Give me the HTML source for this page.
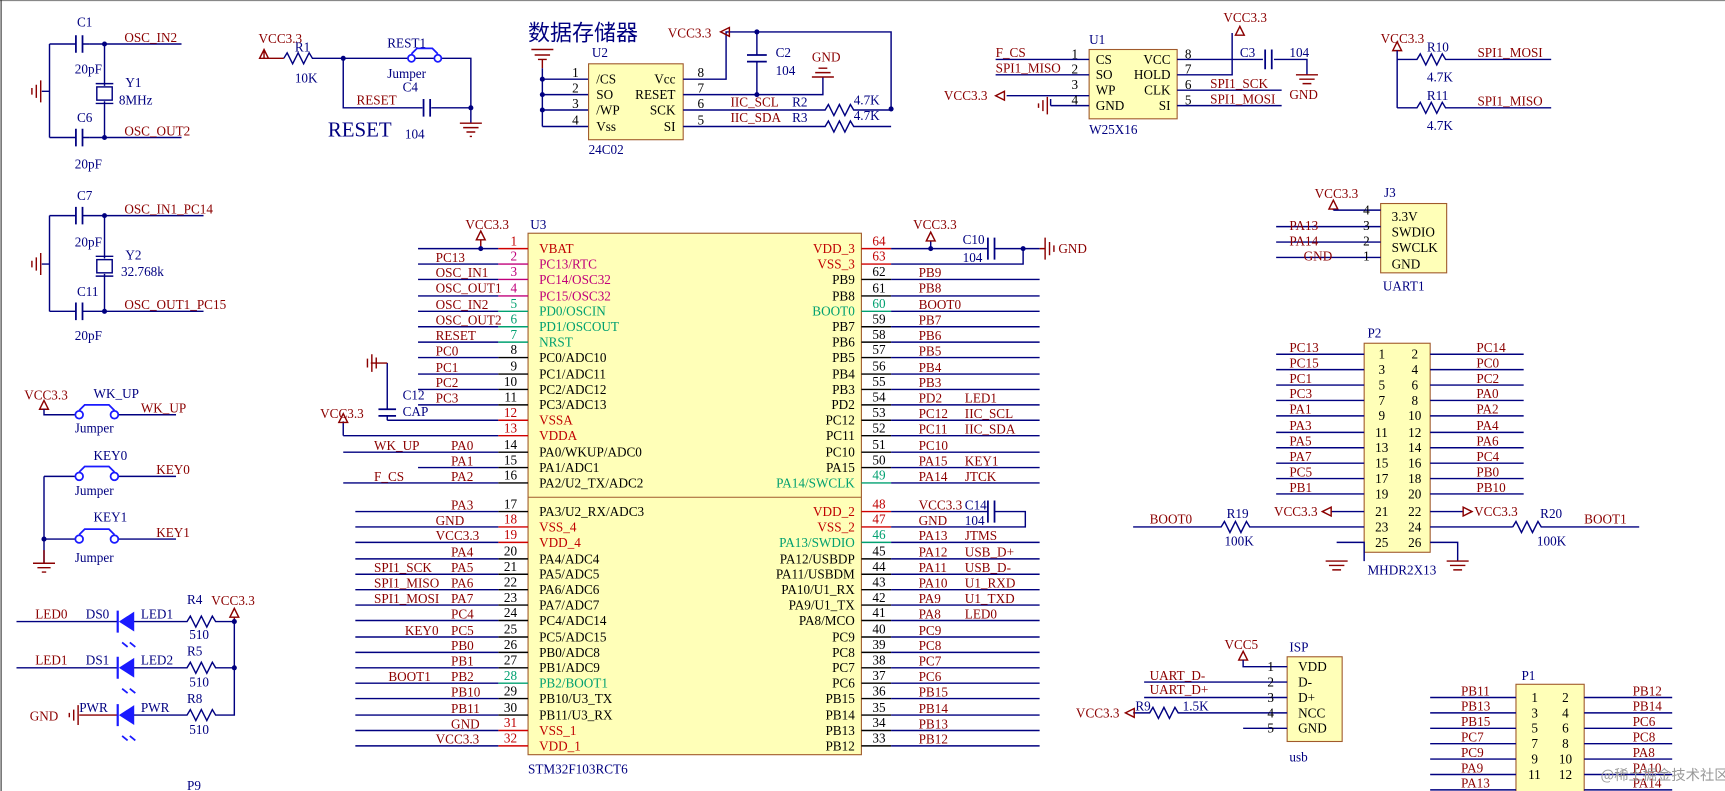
<!DOCTYPE html>
<html><head><meta charset="utf-8"><style>
html,body{margin:0;padding:0;background:#fff;overflow:hidden}
svg{display:block}
text{font-family:"Liberation Serif","Noto Serif CJK SC",serif;font-size:12px}
.w{stroke:#000080;stroke-width:1.3;fill:none}
.p{stroke:#000;stroke-width:1.3}
.r{fill:#c00000}.m{fill:#c0007a}.g{fill:#00a070}.k{fill:#000}.n{fill:#8b0000}.b{fill:#000080}
.lr{stroke:#d00000;stroke-width:1.3}.lm{stroke:#c0007a;stroke-width:1.3}.lg{stroke:#00a070;stroke-width:1.3}
.e{text-anchor:end}
.bl{stroke:#1a1aff;stroke-width:1.6;fill:none}
.gd{stroke:#8b0000;stroke-width:1.3;fill:none}
</style></head><body>
<svg width="1725" height="791" viewBox="0 0 1568 719" xmlns="http://www.w3.org/2000/svg">
<line x1="0" y1="0.5" x2="1568" y2="0.5" stroke="#888"/>
<line x1="1" y1="0" x2="1" y2="719" stroke="#333"/>

<!-- crystal Y1 -->
<g>
<text x="70" y="24" class="b">C1</text>
<path class="w" d="M45 40H69M81 40H165M45 40V125M45 83H38M45 125H69M81 125H165M95 40V78M95 92V125"/>
<path d="M69 32V48M75 32V48M69 117V133M75 117V133" stroke="#000080" stroke-width="1.6"/>
<path class="w" d="M75 40H81M75 125H81"/>
<circle cx="95" cy="40" r="2.3" fill="#000080"/><circle cx="95" cy="125" r="2.3" fill="#000080"/>
<rect x="88" y="79" width="14" height="12" fill="none" stroke="#000080" stroke-width="1.3"/>
<path d="M87 76H103M87 94H103" stroke="#000080" stroke-width="1.3"/>
<path class="gd" d="M37 73V93M33 77V89M29 80V86"/>
<text x="113" y="38" class="n">OSC_IN2</text>
<text x="68" y="67" class="b">20pF</text>
<text x="114" y="79" class="b">Y1</text><text x="108" y="95" class="b">8MHz</text>
<text x="70" y="111" class="b">C6</text>
<text x="113" y="123" class="n">OSC_OUT2</text>
<text x="68" y="153" class="b">20pF</text>
</g>
<!-- crystal Y2 -->
<g>
<text x="70" y="182" class="b">C7</text>
<path class="w" d="M45 196H69M81 196H185M45 196V283M45 240H38M45 283H69M81 283H185M95 196V235M95 249V283M75 196H81M75 283H81"/>
<path d="M69 188V204M75 188V204M69 275V291M75 275V291" stroke="#000080" stroke-width="1.6"/>
<circle cx="95" cy="196" r="2.3" fill="#000080"/><circle cx="95" cy="283" r="2.3" fill="#000080"/>
<rect x="88" y="236" width="14" height="12" fill="none" stroke="#000080" stroke-width="1.3"/>
<path d="M87 233H103M87 251H103" stroke="#000080" stroke-width="1.3"/>
<path class="gd" d="M37 230V250M33 234V246M29 237V243"/>
<text x="113" y="194" class="n">OSC_IN1_PC14</text>
<text x="68" y="224" class="b">20pF</text>
<text x="114" y="236" class="b">Y2</text><text x="110" y="251" class="b">32.768k</text>
<text x="70" y="269" class="b">C11</text>
<text x="113" y="281" class="n">OSC_OUT1_PC15</text>
<text x="68" y="309" class="b">20pF</text>
</g>

<!-- RESET -->
<g>
<text x="235" y="39" class="n">VCC3.3</text>
<path class="gd" d="M240 45V53H258M240 45l-4 8h8z"/>
<text x="268" y="47" class="b">R1</text>
<path class="w" d="M258 53l3 -5l5 10l5 -10l5 10l5 -10l3 5H371M377 53H395M401 53H428V98M312 53V98H384M392 98H428V112"/>
<circle cx="312" cy="53" r="2.3" fill="#000080"/><circle cx="428" cy="98" r="2.3" fill="#000080"/>
<path class="bl" d="M374 49l5 -5h14l5 5"/><circle cx="374" cy="53" r="3.2" class="bl" fill="#fff"/><circle cx="398" cy="53" r="3.2" class="bl" fill="#fff"/>
<path d="M385 90V106M391 90V106" stroke="#000080" stroke-width="1.6"/>
<path class="gd" d="M418 112H438M421 116H435M424 120H432M427 124H429"/>
<text x="268" y="75" class="b">10K</text>
<text x="352" y="43" class="b">REST1</text>
<text x="352" y="71" class="b">Jumper</text>
<text x="366" y="83" class="b">C4</text>
<text x="324" y="95" class="n">RESET</text>
<text x="368" y="126" class="b">104</text>
<text x="298" y="124" class="b" style="font-size:19px">RESET</text>
</g>

<!-- U2 24C02 -->
<g>
<text x="480" y="37" class="b" style="font-size:20px;font-family:'Noto Sans CJK SC',sans-serif">数据存储器</text>
<path class="gd" d="M483 45H503M486 50H500M489 54H497M493 54V62"/>
<path class="w" d="M493 62V115M493 72H535M493 86H535M493 100H535M493 115H535"/>
<circle cx="493" cy="72" r="2.3" fill="#000080"/><circle cx="493" cy="86" r="2.3" fill="#000080"/><circle cx="493" cy="100" r="2.3" fill="#000080"/>
<text x="538" y="52" class="b">U2</text>
<rect x="535" y="58" width="86" height="69" fill="#ffffb8" stroke="#a05a2c"/>
<text x="520" y="70" class="k">1</text><text x="520" y="84" class="k">2</text><text x="520" y="98" class="k">3</text><text x="520" y="113" class="k">4</text>
<text x="542" y="76" class="k">/CS</text><text x="542" y="90" class="k">SO</text><text x="542" y="104" class="k">/WP</text><text x="542" y="119" class="k">Vss</text>
<text x="614" y="76" class="k e">Vcc</text><text x="614" y="90" class="k e">RESET</text><text x="614" y="104" class="k e">SCK</text><text x="614" y="119" class="k e">SI</text>
<text x="634" y="70" class="k">8</text><text x="634" y="84" class="k">7</text><text x="634" y="98" class="k">6</text><text x="634" y="113" class="k">5</text>
<path class="w" d="M621 72H660V29H810V99M621 86H748V70M621 100H750l3 -5l5 10l5 -10l5 10l5 -10l3 5H810M621 115H750l3 -5l5 10l5 -10l5 10l5 -10l3 5H810M688 29V50M688 56V86"/>
<path d="M679 50H697M679 56H697" stroke="#000080" stroke-width="1.6"/>
<circle cx="688" cy="29" r="2.3" fill="#000080"/><circle cx="688" cy="86" r="2.3" fill="#000080"/><circle cx="810" cy="99" r="2.3" fill="#000080"/>
<path class="gd" d="M655 29l8 -4v8zM738 70H758M741 66H755M744 62H752"/>
<text x="607" y="34" class="n">VCC3.3</text>
<text x="705" y="52" class="b">C2</text><text x="705" y="68" class="b">104</text>
<text x="738" y="56" class="n">GND</text>
<text x="664" y="97" class="n">IIC_SCL</text><text x="664" y="111" class="n">IIC_SDA</text>
<text x="720" y="97" class="b">R2</text><text x="720" y="111" class="b">R3</text>
<text x="776" y="95" class="b">4.7K</text><text x="776" y="109" class="b">4.7K</text>
<text x="535" y="140" class="b">24C02</text>
</g>

<!-- U1 W25X16 -->
<g>
<text x="990" y="40" class="b">U1</text>
<rect x="990" y="45" width="80" height="63" fill="#ffffb8" stroke="#a05a2c"/>
<path class="w" d="M905 54H990M905 68H990M915 87H990M955 96H990M955 96V90M1070 54H1148M1158 54H1188V68M1070 68H1120V30M1070 82H1165M1070 96H1165"/>
<path d="M1150 45V63M1156 45V63" stroke="#000080" stroke-width="1.6"/>
<path class="gd" d="M952 88V104M948 91V101M944 94V98M905 87l8 -4v8zM1178 68H1198M1181 72H1195M1184 76H1192M1127 24l-4 8h8z"/>
<text x="980" y="53" class="k e">1</text><text x="980" y="67" class="k e">2</text><text x="980" y="81" class="k e">3</text><text x="980" y="95" class="k e">4</text>
<text x="996" y="58" class="k">CS</text><text x="996" y="72" class="k">SO</text><text x="996" y="86" class="k">WP</text><text x="996" y="100" class="k">GND</text>
<text x="1064" y="58" class="k e">VCC</text><text x="1064" y="72" class="k e">HOLD</text><text x="1064" y="86" class="k e">CLK</text><text x="1064" y="100" class="k e">SI</text>
<text x="1077" y="53" class="k">8</text><text x="1077" y="67" class="k">7</text><text x="1077" y="81" class="k">6</text><text x="1077" y="95" class="k">5</text>
<text x="905" y="52" class="n">F_CS</text><text x="905" y="66" class="n">SPI1_MISO</text>
<text x="858" y="91" class="n">VCC3.3</text>
<text x="1127" y="52" class="b">C3</text><text x="1172" y="52" class="b">104</text>
<text x="1100" y="80" class="n">SPI1_SCK</text><text x="1100" y="94" class="n">SPI1_MOSI</text>
<text x="1112" y="20" class="n">VCC3.3</text>
<text x="1172" y="90" class="n">GND</text>
<text x="990" y="122" class="b">W25X16</text>
</g>

<!-- R10 R11 -->
<g>
<text x="1255" y="39" class="n">VCC3.3</text>
<path class="gd" d="M1270 38l-4 8h8z"/>
<path class="w" d="M1270 46V98M1270 54H1288l3 -5l5 10l5 -10l5 10l5 -10l3 5H1410M1270 98H1288l3 -5l5 10l5 -10l5 10l5 -10l3 5H1410"/>
<text x="1297" y="47" class="b">R10</text><text x="1297" y="74" class="b">4.7K</text>
<text x="1297" y="91" class="b">R11</text><text x="1297" y="118" class="b">4.7K</text>
<text x="1343" y="52" class="n">SPI1_MOSI</text><text x="1343" y="96" class="n">SPI1_MISO</text>
</g>

<!-- J3 -->
<g>
<text x="1195" y="180" class="n">VCC3.3</text>
<path class="gd" d="M1212 182l-4 8h8zM1212 190V191"/>
<text x="1258" y="179" class="b">J3</text>
<rect x="1255" y="185" width="60" height="63" fill="#ffffb8" stroke="#a05a2c"/>
<path class="w" d="M1212 191H1255M1160 206H1255M1160 220H1255M1160 234H1255"/>
<text x="1245" y="195" class="k e">4</text><text x="1245" y="209" class="k e">3</text><text x="1245" y="223" class="k e">2</text><text x="1245" y="237" class="k e">1</text>
<text x="1265" y="201" class="k">3.3V</text><text x="1265" y="215" class="k">SWDIO</text><text x="1265" y="229" class="k">SWCLK</text><text x="1265" y="244" class="k">GND</text>
<text x="1172" y="209" class="n">PA13</text><text x="1172" y="223" class="n">PA14</text><text x="1185" y="237" class="n">GND</text>
<text x="1257" y="264" class="b">UART1</text>
</g>

<!-- P2 -->
<g>
<text x="1243" y="307" class="b">P2</text>
<rect x="1240" y="312" width="60" height="190" fill="#ffffb8" stroke="#a05a2c"/>
<path class="w" d="M1160 322H1240M1160 336H1240M1160 350H1240M1160 364H1240M1160 378H1240M1160 393H1240M1160 407H1240M1160 421H1240M1160 435H1240M1160 449H1240M1210 465H1240M1140 479H1240M1215 493H1240V510M1300 322H1385M1300 336H1385M1300 350H1385M1300 364H1385M1300 378H1385M1300 393H1385M1300 407H1385M1300 421H1385M1300 435H1385M1300 449H1385M1300 465H1330M1300 479H1375M1300 493H1325V510M1030 479H1110l3 -5l5 10l5 -10l5 10l5 -10l3 5H1140M1375 479l3 -5l5 10l5 -10l5 10l5 -10l3 5H1490"/>
<path class="gd" d="M1205 510H1225M1208 514H1222M1211 518H1219M1315 510H1335M1318 514H1332M1321 518H1329M1202 465l8 -4v8zM1338 465l-8 -4v8z"/>
<text x="1253" y="326" class="k">1</text><text x="1253" y="340" class="k">3</text><text x="1253" y="354" class="k">5</text><text x="1253" y="368" class="k">7</text><text x="1253" y="382" class="k">9</text><text x="1250" y="397" class="k">11</text><text x="1250" y="411" class="k">13</text><text x="1250" y="425" class="k">15</text><text x="1250" y="439" class="k">17</text><text x="1250" y="453" class="k">19</text><text x="1250" y="469" class="k">21</text><text x="1250" y="483" class="k">23</text><text x="1250" y="497" class="k">25</text>
<text x="1283" y="326" class="k">2</text><text x="1283" y="340" class="k">4</text><text x="1283" y="354" class="k">6</text><text x="1283" y="368" class="k">8</text><text x="1280" y="382" class="k">10</text><text x="1280" y="397" class="k">12</text><text x="1280" y="411" class="k">14</text><text x="1280" y="425" class="k">16</text><text x="1280" y="439" class="k">18</text><text x="1280" y="453" class="k">20</text><text x="1280" y="469" class="k">22</text><text x="1280" y="483" class="k">24</text><text x="1280" y="497" class="k">26</text>
<text x="1172" y="320" class="n">PC13</text><text x="1172" y="334" class="n">PC15</text><text x="1172" y="348" class="n">PC1</text><text x="1172" y="362" class="n">PC3</text><text x="1172" y="376" class="n">PA1</text><text x="1172" y="391" class="n">PA3</text><text x="1172" y="405" class="n">PA5</text><text x="1172" y="419" class="n">PA7</text><text x="1172" y="433" class="n">PC5</text><text x="1172" y="447" class="n">PB1</text>
<text x="1342" y="320" class="n">PC14</text><text x="1342" y="334" class="n">PC0</text><text x="1342" y="348" class="n">PC2</text><text x="1342" y="362" class="n">PA0</text><text x="1342" y="376" class="n">PA2</text><text x="1342" y="391" class="n">PA4</text><text x="1342" y="405" class="n">PA6</text><text x="1342" y="419" class="n">PC4</text><text x="1342" y="433" class="n">PB0</text><text x="1342" y="447" class="n">PB10</text>
<text x="1158" y="469" class="n">VCC3.3</text><text x="1340" y="469" class="n">VCC3.3</text>
<text x="1045" y="476" class="n">BOOT0</text><text x="1115" y="471" class="b">R19</text><text x="1113" y="496" class="b">100K</text>
<text x="1400" y="471" class="b">R20</text><text x="1397" y="496" class="b">100K</text><text x="1440" y="476" class="n">BOOT1</text>
<text x="1243" y="522" class="b">MHDR2X13</text>
</g>

<!-- ISP -->
<g>
<text x="1113" y="590" class="n">VCC5</text>
<path class="gd" d="M1130 592l-4 8h8z"/>
<text x="1172" y="592" class="b">ISP</text>
<rect x="1170" y="597" width="50" height="77" fill="#ffffb8" stroke="#a05a2c"/>
<path class="w" d="M1130 600V606H1170M1040 620H1170M1040 634H1170M1030 648H1045l3 -5l5 10l5 -10l5 10l5 -10l3 5H1170M1130 662H1170"/>
<path class="gd" d="M1023 648l8 -4v8z"/>
<text x="1158" y="610" class="k e">1</text><text x="1158" y="624" class="k e">2</text><text x="1158" y="638" class="k e">3</text><text x="1158" y="652" class="k e">4</text><text x="1158" y="666" class="k e">5</text>
<text x="1180" y="610" class="k">VDD</text><text x="1180" y="624" class="k">D-</text><text x="1180" y="638" class="k">D+</text><text x="1180" y="652" class="k">NCC</text><text x="1180" y="666" class="k">GND</text>
<text x="1045" y="618" class="n">UART_D-</text><text x="1045" y="631" class="n">UART_D+</text>
<text x="1032" y="646" class="b">R9</text><text x="1075" y="646" class="b">1.5K</text>
<text x="978" y="652" class="n">VCC3.3</text>
<text x="1172" y="692" class="b">usb</text>
</g>

<!-- P1 -->
<g>
<text x="1383" y="618" class="b">P1</text>
<rect x="1378" y="622" width="62" height="100" fill="#ffffb8" stroke="#a05a2c"/>
<path class="w" d="M1300 634H1378M1300 648H1378M1300 662H1378M1300 676H1378M1300 690H1378M1300 704H1378M1300 718H1378M1440 634H1520M1440 648H1520M1440 662H1520M1440 676H1520M1440 690H1520M1440 704H1520M1440 718H1520"/>
<text x="1392" y="638" class="k">1</text><text x="1392" y="652" class="k">3</text><text x="1392" y="666" class="k">5</text><text x="1392" y="680" class="k">7</text><text x="1392" y="694" class="k">9</text><text x="1389" y="708" class="k">11</text>
<text x="1420" y="638" class="k">2</text><text x="1420" y="652" class="k">4</text><text x="1420" y="666" class="k">6</text><text x="1420" y="680" class="k">8</text><text x="1417" y="694" class="k">10</text><text x="1417" y="708" class="k">12</text>
<text x="1328" y="632" class="n">PB11</text><text x="1328" y="646" class="n">PB13</text><text x="1328" y="660" class="n">PB15</text><text x="1328" y="674" class="n">PC7</text><text x="1328" y="688" class="n">PC9</text><text x="1328" y="702" class="n">PA9</text><text x="1328" y="716" class="n">PA13</text>
<text x="1484" y="632" class="n">PB12</text><text x="1484" y="646" class="n">PB14</text><text x="1484" y="660" class="n">PC6</text><text x="1484" y="674" class="n">PC8</text><text x="1484" y="688" class="n">PA8</text><text x="1484" y="702" class="n">PA10</text><text x="1484" y="716" class="n">PA14</text>
<text x="1455" y="709" fill="#999" style="font-family:'Noto Sans CJK SC',sans-serif;font-size:13px">@稀土掘金技术社区</text>
</g>

<!-- keys -->
<g>
<text x="22" y="363" class="n">VCC3.3</text>
<path class="gd" d="M40 364l-4 8h8z"/>
<path class="w" d="M40 372V377H68M108 377H160M40 433V512M40 433H68M108 433H160M40 490H68M108 490H160"/>
<circle cx="40" cy="490" r="2.3" fill="#000080"/>
<path class="bl" d="M72 373l5 -5h22l5 5M72 429l5 -5h22l5 5M72 486l5 -5h22l5 5"/>
<circle cx="72" cy="377" r="3.5" class="bl" fill="#fff"/><circle cx="104" cy="377" r="3.5" class="bl" fill="#fff"/>
<circle cx="72" cy="433" r="3.5" class="bl" fill="#fff"/><circle cx="104" cy="433" r="3.5" class="bl" fill="#fff"/>
<circle cx="72" cy="490" r="3.5" class="bl" fill="#fff"/><circle cx="104" cy="490" r="3.5" class="bl" fill="#fff"/>
<path class="gd" d="M40 500V512M30 512H50M34 516H46M38 520H42"/>
<text x="85" y="362" class="b">WK_UP</text><text x="128" y="375" class="n">WK_UP</text><text x="68" y="393" class="b">Jumper</text>
<text x="85" y="418" class="b">KEY0</text><text x="142" y="431" class="n">KEY0</text><text x="68" y="450" class="b">Jumper</text>
<text x="85" y="474" class="b">KEY1</text><text x="142" y="488" class="n">KEY1</text><text x="68" y="511" class="b">Jumper</text>
</g>

<!-- LEDs -->
<g>
<path class="w" d="M15 565H107M121 565H170l3 -5l5 10l5 -10l5 10l5 -10l3 5H213V650H199M15 607H107M121 607H170l3 -5l5 10l5 -10l5 10l5 -10l3 5H213M121 650H170l3 -5l5 10l5 -10l5 10l5 -10l3 5H199"/>
<path class="gd" d="M72 650H107M71 641V659M67 645V655M63 648V652M213 553l-4 8h8zM213 561V565"/>
<circle cx="213" cy="565" r="2.3" fill="#000080"/><circle cx="213" cy="607" r="2.3" fill="#000080"/>
<path d="M122 556V574L108 565Z M122 598V616L108 607Z M122 641V659L108 650Z" fill="#1a1aff"/>
<path d="M107 555V575M107 597V617M107 640V660" stroke="#1a1aff" stroke-width="2"/>
<path class="bl" d="M111 584l5 4M118 584l5 4M111 626l5 4M118 626l5 4M111 669l5 4M118 669l5 4" stroke-width="1.3"/>
<text x="32" y="562" class="n">LED0</text><text x="78" y="562" class="b">DS0</text><text x="128" y="562" class="b">LED1</text>
<text x="170" y="549" class="b">R4</text><text x="192" y="550" class="n">VCC3.3</text><text x="172" y="581" class="b">510</text>
<text x="32" y="604" class="n">LED1</text><text x="78" y="604" class="b">DS1</text><text x="128" y="604" class="b">LED2</text>
<text x="170" y="596" class="b">R5</text><text x="172" y="624" class="b">510</text>
<text x="27" y="655" class="n">GND</text><text x="72" y="647" class="b">PWR</text><text x="128" y="647" class="b">PWR</text>
<text x="170" y="639" class="b">R8</text><text x="172" y="667" class="b">510</text>
<text x="170" y="718" class="b">P9</text>
</g>

<!-- U3 main chip -->
<g>
<text x="482" y="208" class="b">U3</text>
<text x="423" y="208" class="n">VCC3.3</text>
<path class="gd" d="M437 210l-4 8h8zM437 218V226"/>
<rect x="480" y="212" width="303" height="474" fill="#ffffb8" stroke="#a05a2c"/>
<line x1="480" y1="452" x2="783" y2="452" stroke="#a05a2c"/>
<path class="w" d="M380 226H453M380 240H453M380 254H453M380 269H453M380 283H453M380 297H453M380 311H453M380 325H453M380 340H453M380 354H453M380 368H453M352 382H453M312 396H453M312 411H453M380 425H453M312 439H453M352 330V372M352 378V382M312 383V396"/>
<path d="M344 372H360M344 378H360" stroke="#000080" stroke-width="1.6"/>
<path class="gd" d="M337 330H352M338 322V338M342 325V335M334 326V334M312 376l-4 8h8z"/>
<circle cx="437" cy="226" r="2.3" fill="#000080"/>
<path class="lr" d="M453 226H480M453 382H480M453 396H480M453 479H480M453 493H480M453 664H480M453 678H480"/>
<path class="lm" d="M453 240H480M453 254H480M453 269H480"/>
<path class="lg" d="M453 283H480M453 297H480M453 311H480M453 621H480"/>
<path class="p" d="M453 325H480M453 340H480M453 354H480M453 368H480M453 411H480M453 425H480M453 439H480M453 465H480M453 508H480M453 522H480M453 536H480M453 550H480M453 564H480M453 579H480M453 593H480M453 607H480M453 635H480M453 650H480"/>
<path class="w" d="M323 465H453M323 479H453M323 493H453M323 508H453M323 522H453M323 536H453M323 550H453M323 564H453M323 579H453M323 593H453M323 607H453M323 621H453M323 635H453M323 650H453M323 664H453M323 678H453"/>
<text x="470" y="223" class="r e">1</text><text x="470" y="237" class="m e">2</text><text x="470" y="251" class="m e">3</text><text x="470" y="266" class="m e">4</text><text x="470" y="280" class="g e">5</text><text x="470" y="294" class="g e">6</text><text x="470" y="308" class="g e">7</text><text x="470" y="322" class="k e">8</text><text x="470" y="337" class="k e">9</text><text x="470" y="351" class="k e">10</text><text x="470" y="365" class="k e">11</text><text x="470" y="379" class="r e">12</text><text x="470" y="393" class="r e">13</text><text x="470" y="408" class="k e">14</text><text x="470" y="422" class="k e">15</text><text x="470" y="436" class="k e">16</text>
<text x="470" y="462" class="k e">17</text><text x="470" y="476" class="r e">18</text><text x="470" y="490" class="r e">19</text><text x="470" y="505" class="k e">20</text><text x="470" y="519" class="k e">21</text><text x="470" y="533" class="k e">22</text><text x="470" y="547" class="k e">23</text><text x="470" y="561" class="k e">24</text><text x="470" y="576" class="k e">25</text><text x="470" y="590" class="k e">26</text><text x="470" y="604" class="k e">27</text><text x="470" y="618" class="g e">28</text><text x="470" y="632" class="k e">29</text><text x="470" y="647" class="k e">30</text><text x="470" y="661" class="r e">31</text><text x="470" y="675" class="r e">32</text>
<text x="490" y="230" class="r">VBAT</text><text x="490" y="244" class="m">PC13/RTC</text><text x="490" y="258" class="m">PC14/OSC32</text><text x="490" y="273" class="m">PC15/OSC32</text><text x="490" y="287" class="g">PD0/OSCIN</text><text x="490" y="301" class="g">PD1/OSCOUT</text><text x="490" y="315" class="g">NRST</text><text x="490" y="329" class="k">PC0/ADC10</text><text x="490" y="344" class="k">PC1/ADC11</text><text x="490" y="358" class="k">PC2/ADC12</text><text x="490" y="372" class="k">PC3/ADC13</text><text x="490" y="386" class="r">VSSA</text><text x="490" y="400" class="r">VDDA</text><text x="490" y="415" class="k">PA0/WKUP/ADC0</text><text x="490" y="429" class="k">PA1/ADC1</text><text x="490" y="443" class="k">PA2/U2_TX/ADC2</text>
<text x="490" y="469" class="k">PA3/U2_RX/ADC3</text><text x="490" y="483" class="r">VSS_4</text><text x="490" y="497" class="r">VDD_4</text><text x="490" y="512" class="k">PA4/ADC4</text><text x="490" y="526" class="k">PA5/ADC5</text><text x="490" y="540" class="k">PA6/ADC6</text><text x="490" y="554" class="k">PA7/ADC7</text><text x="490" y="568" class="k">PC4/ADC14</text><text x="490" y="583" class="k">PC5/ADC15</text><text x="490" y="597" class="k">PB0/ADC8</text><text x="490" y="611" class="k">PB1/ADC9</text><text x="490" y="625" class="g">PB2/BOOT1</text><text x="490" y="639" class="k">PB10/U3_TX</text><text x="490" y="654" class="k">PB11/U3_RX</text><text x="490" y="668" class="r">VSS_1</text><text x="490" y="682" class="r">VDD_1</text>
<text x="396" y="238" class="n">PC13</text><text x="396" y="252" class="n">OSC_IN1</text><text x="396" y="266" class="n">OSC_OUT1</text><text x="396" y="281" class="n">OSC_IN2</text><text x="396" y="295" class="n">OSC_OUT2</text><text x="396" y="309" class="n">RESET</text><text x="396" y="323" class="n">PC0</text><text x="396" y="338" class="n">PC1</text><text x="396" y="352" class="n">PC2</text><text x="396" y="366" class="n">PC3</text>
<text x="366" y="363" class="b">C12</text><text x="366" y="378" class="b">CAP</text><text x="291" y="380" class="n">VCC3.3</text>
<text x="340" y="409" class="n">WK_UP</text><text x="410" y="409" class="n">PA0</text><text x="410" y="423" class="n">PA1</text><text x="340" y="437" class="n">F_CS</text><text x="410" y="437" class="n">PA2</text>
<text x="410" y="463" class="n">PA3</text><text x="396" y="477" class="n">GND</text><text x="396" y="491" class="n">VCC3.3</text><text x="410" y="506" class="n">PA4</text>
<text x="340" y="520" class="n">SPI1_SCK</text><text x="410" y="520" class="n">PA5</text><text x="340" y="534" class="n">SPI1_MISO</text><text x="410" y="534" class="n">PA6</text><text x="340" y="548" class="n">SPI1_MOSI</text><text x="410" y="548" class="n">PA7</text>
<text x="410" y="562" class="n">PC4</text><text x="368" y="577" class="n">KEY0</text><text x="410" y="577" class="n">PC5</text><text x="410" y="591" class="n">PB0</text><text x="410" y="605" class="n">PB1</text><text x="353" y="619" class="n">BOOT1</text><text x="410" y="619" class="n">PB2</text><text x="410" y="633" class="n">PB10</text><text x="410" y="648" class="n">PB11</text><text x="410" y="662" class="n">GND</text><text x="396" y="676" class="n">VCC3.3</text>
<text x="480" y="703" class="b">STM32F103RCT6</text>

<path class="lr" d="M783 226H810M783 240H810M783 465H810M783 479H810"/>
<path class="lg" d="M783 283H810M783 439H810M783 493H810"/>
<path class="p" d="M783 254H810M783 269H810M783 297H810M783 311H810M783 325H810M783 340H810M783 354H810M783 368H810M783 382H810M783 396H810M783 411H810M783 425H810M783 508H810M783 522H810M783 536H810M783 550H810M783 564H810M783 579H810M783 593H810M783 607H810M783 621H810M783 635H810M783 650H810M783 664H810M783 678H810"/>
<path class="w" d="M810 226H898M904 226H945M930 226V240H810M810 254H945M810 269H945M810 283H945M810 297H945M810 311H945M810 325H945M810 340H945M810 354H945M810 368H945M810 382H945M810 396H945M810 411H945M810 425H945M810 439H945M810 465H898M904 465H932V479H810M810 493H945M810 508H945M810 522H945M810 536H945M810 550H945M810 564H945M810 579H945M810 593H945M810 607H945M810 621H945M810 635H945M810 650H945M810 664H945M810 678H945M846 219V226"/>
<path d="M898 216V236M904 216V236M898 455V475M904 455V475" stroke="#000080" stroke-width="1.6"/>
<circle cx="846" cy="226" r="2.3" fill="#000080"/><circle cx="930" cy="226" r="2.3" fill="#000080"/>
<path class="gd" d="M846 211l-4 8h8zM945 226H950M950 216V236M954 220V232M958 223V229"/>
<text x="830" y="208" class="n">VCC3.3</text><text x="875" y="222" class="b">C10</text><text x="875" y="238" class="b">104</text><text x="962" y="230" class="n">GND</text>
<text x="793" y="223" class="r">64</text><text x="793" y="237" class="r">63</text><text x="793" y="251" class="k">62</text><text x="793" y="266" class="k">61</text><text x="793" y="280" class="g">60</text><text x="793" y="294" class="k">59</text><text x="793" y="308" class="k">58</text><text x="793" y="322" class="k">57</text><text x="793" y="337" class="k">56</text><text x="793" y="351" class="k">55</text><text x="793" y="365" class="k">54</text><text x="793" y="379" class="k">53</text><text x="793" y="393" class="k">52</text><text x="793" y="408" class="k">51</text><text x="793" y="422" class="k">50</text><text x="793" y="436" class="g">49</text>
<text x="793" y="462" class="r">48</text><text x="793" y="476" class="r">47</text><text x="793" y="490" class="g">46</text><text x="793" y="505" class="k">45</text><text x="793" y="519" class="k">44</text><text x="793" y="533" class="k">43</text><text x="793" y="547" class="k">42</text><text x="793" y="561" class="k">41</text><text x="793" y="576" class="k">40</text><text x="793" y="590" class="k">39</text><text x="793" y="604" class="k">38</text><text x="793" y="618" class="k">37</text><text x="793" y="632" class="k">36</text><text x="793" y="647" class="k">35</text><text x="793" y="661" class="k">34</text><text x="793" y="675" class="k">33</text>
<text x="777" y="230" class="r e">VDD_3</text><text x="777" y="244" class="r e">VSS_3</text><text x="777" y="258" class="k e">PB9</text><text x="777" y="273" class="k e">PB8</text><text x="777" y="287" class="g e">BOOT0</text><text x="777" y="301" class="k e">PB7</text><text x="777" y="315" class="k e">PB6</text><text x="777" y="329" class="k e">PB5</text><text x="777" y="344" class="k e">PB4</text><text x="777" y="358" class="k e">PB3</text><text x="777" y="372" class="k e">PD2</text><text x="777" y="386" class="k e">PC12</text><text x="777" y="400" class="k e">PC11</text><text x="777" y="415" class="k e">PC10</text><text x="777" y="429" class="k e">PA15</text><text x="777" y="443" class="g e">PA14/SWCLK</text>
<text x="777" y="469" class="r e">VDD_2</text><text x="777" y="483" class="r e">VSS_2</text><text x="777" y="497" class="g e">PA13/SWDIO</text><text x="777" y="512" class="k e">PA12/USBDP</text><text x="777" y="526" class="k e">PA11/USBDM</text><text x="777" y="540" class="k e">PA10/U1_RX</text><text x="777" y="554" class="k e">PA9/U1_TX</text><text x="777" y="568" class="k e">PA8/MCO</text><text x="777" y="583" class="k e">PC9</text><text x="777" y="597" class="k e">PC8</text><text x="777" y="611" class="k e">PC7</text><text x="777" y="625" class="k e">PC6</text><text x="777" y="639" class="k e">PB15</text><text x="777" y="654" class="k e">PB14</text><text x="777" y="668" class="k e">PB13</text><text x="777" y="682" class="k e">PB12</text>
<text x="835" y="252" class="n">PB9</text><text x="835" y="266" class="n">PB8</text><text x="835" y="281" class="n">BOOT0</text><text x="835" y="295" class="n">PB7</text><text x="835" y="309" class="n">PB6</text><text x="835" y="323" class="n">PB5</text><text x="835" y="338" class="n">PB4</text><text x="835" y="352" class="n">PB3</text><text x="835" y="366" class="n">PD2</text><text x="877" y="366" class="n">LED1</text><text x="835" y="380" class="n">PC12</text><text x="877" y="380" class="n">IIC_SCL</text><text x="835" y="394" class="n">PC11</text><text x="877" y="394" class="n">IIC_SDA</text><text x="835" y="409" class="n">PC10</text><text x="835" y="423" class="n">PA15</text><text x="877" y="423" class="n">KEY1</text><text x="835" y="437" class="n">PA14</text><text x="877" y="437" class="n">JTCK</text>
<text x="835" y="463" class="n">VCC3.3</text><text x="877" y="463" class="b">C14</text><text x="835" y="477" class="n">GND</text><text x="877" y="477" class="b">104</text>
<text x="835" y="491" class="n">PA13</text><text x="877" y="491" class="n">JTMS</text><text x="835" y="506" class="n">PA12</text><text x="877" y="506" class="n">USB_D+</text><text x="835" y="520" class="n">PA11</text><text x="877" y="520" class="n">USB_D-</text><text x="835" y="534" class="n">PA10</text><text x="877" y="534" class="n">U1_RXD</text><text x="835" y="548" class="n">PA9</text><text x="877" y="548" class="n">U1_TXD</text><text x="835" y="562" class="n">PA8</text><text x="877" y="562" class="n">LED0</text>
<text x="835" y="577" class="n">PC9</text><text x="835" y="591" class="n">PC8</text><text x="835" y="605" class="n">PC7</text><text x="835" y="619" class="n">PC6</text><text x="835" y="633" class="n">PB15</text><text x="835" y="648" class="n">PB14</text><text x="835" y="662" class="n">PB13</text><text x="835" y="676" class="n">PB12</text>
</g>
</svg>
</body></html>
